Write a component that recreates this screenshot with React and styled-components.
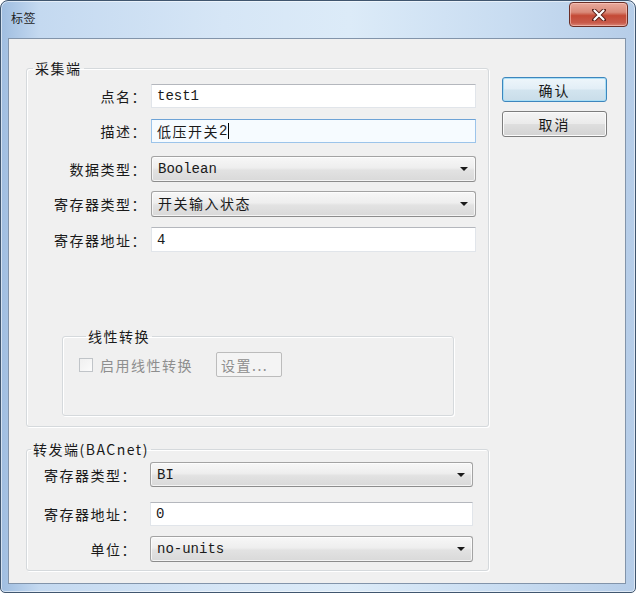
import React from 'react';
import styled, { createGlobalStyle } from 'styled-components';

const Global = createGlobalStyle`
  html, body { margin: 0; padding: 0; background: #ffffff; }
  body { font-family: "Noto Sans CJK SC", "Liberation Sans", sans-serif; }
  * { box-sizing: border-box; }
`;

const Window = styled.div`
  width: 636px;
  height: 593px;
  display: flex;
  flex-direction: column;
  border: 1px solid #40566f;
  border-radius: 8px 8px 5px 5px;
  background: linear-gradient(90deg, #9fbde0 0%, #c4d9f0 6%, #d6e6f6 35%, #dcebf8 55%, #c8dcf1 80%, #b6cde8 100%);
  padding: 0 9px 8px 7px;
  box-shadow: inset 0 0 0 1px rgba(255, 255, 255, 0.55);
`;

const TitleBar = styled.div`
  height: 37px;
  display: flex;
  justify-content: space-between;
  align-items: flex-start;
`;

const Title = styled.div`
  margin: 9px 0 0 3px;
  font-size: 12px;
  line-height: 16px;
  color: #1e1e1e;
  letter-spacing: 0.5px;
`;

const CloseButton = styled.div`
  width: 59px;
  height: 25px;
  margin: 1px -2px 0 0;
  border: 1px solid #6b2e26;
  border-radius: 4px;
  background: linear-gradient(#e9a99c 0%, #d98a79 40%, #c44a36 55%, #c85a4a 85%, #d98577 100%);
  box-shadow: inset 0 0 0 1px rgba(255, 210, 200, 0.55);
  display: flex;
  align-items: center;
  justify-content: center;
`;

const Client = styled.div`
  flex: 1;
  display: flex;
  align-items: flex-start;
  background: #f0f0f0;
  border: 1px solid #8294aa;
`;

const LeftColumn = styled.div`
  display: flex;
  flex-direction: column;
  gap: 13px;
  padding: 20px 0 0 17px;
`;

const RightColumn = styled.div`
  display: flex;
  flex-direction: column;
  gap: 9px;
  padding-top: 38px;
  margin-left: 13px;
`;

const Group = styled.fieldset`
  margin: ${p => p.$m || '0'};
  width: ${p => p.$w}px;
  padding: ${p => p.$pad};
  border: 1px solid #d5d9dc;
  border-radius: 3px;
  box-shadow: inset 1px 1px 0 #ffffff, 1px 1px 0 #ffffff;
  min-width: 0;
`;

const Legend = styled.legend`
  margin-left: ${p => p.$ml}px;
  padding: 0 2px;
  font-size: 14px;
  line-height: 18px;
  letter-spacing: 1.5px;
  color: #1a1a1a;
`;

const Row = styled.div`
  display: grid;
  grid-template-columns: ${p => p.$lw}px ${p => p.$fw}px;
  column-gap: ${p => p.$gap}px;
  align-items: center;
  margin-top: ${p => p.$mt || 0}px;
`;

const Label = styled.div`
  text-align: right;
  font-size: 14px;
  line-height: 18px;
  letter-spacing: 1.5px;
  color: #1a1a1a;
  white-space: nowrap;
`;

const Field = styled.div`
  height: ${p => p.$h}px;
  display: flex;
  align-items: center;
  padding: 0 6px 0 5px;
  font-family: "Liberation Mono", "Noto Sans CJK SC", monospace;
  font-size: 14px;
  line-height: 18px;
  color: #1a1a1a;
  white-space: nowrap;
`;

const TextBox = styled(Field)`
  background: ${p => (p.$focused ? '#f6fbff' : '#ffffff')};
  border: 1px solid ${p => (p.$focused ? '#9cc4ea' : '#e1e5ea')};
  border-top-color: ${p => (p.$focused ? '#6ea3d6' : '#b4b7bd')};
`;

const Combo = styled(Field)`
  justify-content: space-between;
  padding-left: 6px;
  border: 1px solid #a3a3a3;
  border-bottom-color: #8c8c8c;
  border-radius: 3px;
  background: linear-gradient(#f7f7f7 0%, #eeeeee 45%, #e2e2e2 55%, #d9d9d9 100%);
  box-shadow: inset 0 0 0 1px rgba(255, 255, 255, 0.7);
`;

const Cjk = styled.span`
  font-family: "Noto Sans CJK SC", sans-serif;
  letter-spacing: 1.5px;
`;

const Caret = styled.span`
  display: inline-block;
  width: 1px;
  height: 16px;
  background: #000;
  margin-left: 1px;
`;

const Arrow = styled.span`
  width: 0;
  height: 0;
  border-left: 4px solid transparent;
  border-right: 4px solid transparent;
  border-top: 4px solid #1a1a1a;
  margin-right: 1px;
`;

const CheckRow = styled.div`
  display: flex;
  align-items: center;
`;

const CheckBox = styled.span`
  width: 14px;
  height: 14px;
  border: 1px solid #c0c4c8;
  background: linear-gradient(135deg, #f0f0f0, #fbfbfb);
  margin-right: 7px;
`;

const DisabledText = styled.span`
  font-size: 14px;
  line-height: 18px;
  letter-spacing: 1.5px;
  color: #8e8e8e;
`;

const SmallButton = styled.div`
  width: 66px;
  height: 25px;
  margin-left: 23px;
  border: 1px solid #bcbcbc;
  border-radius: 2px;
  background: #f4f4f4;
  display: flex;
  align-items: center;
  padding-left: 4px;
  font-size: 14px;
  letter-spacing: 1.5px;
  color: #8e8e8e;
`;

const DialogButton = styled.div`
  width: 105px;
  height: ${p => p.$h || 25}px;
  display: flex;
  align-items: center;
  justify-content: center;
  border: 1px solid ${p => (p.$primary ? '#3d86bd' : '#7d7d7d')};
  border-radius: 3px;
  background: ${p =>
    p.$primary
      ? 'linear-gradient(#eef6fb 0%, #e2eef6 48%, #d2e4ef 52%, #c9dde9 100%)'
      : 'linear-gradient(#f4f4f4 0%, #ebebeb 48%, #dedede 52%, #d3d3d3 100%)'};
  box-shadow: inset 0 0 0 1px ${p => (p.$primary ? '#a9def5' : '#fbfbfb')};
  font-size: 14px;
  letter-spacing: 2px;
  color: #1a1a1a;
`;

const TextField = ({ h = 24, focused, children }) => (
  <TextBox $h={h} $focused={focused}>{children}</TextBox>
);

const ComboField = ({ h = 26, children }) => (
  <Combo $h={h}>
    <span>{children}</span>
    <Arrow />
  </Combo>
);

export default function App() {
  return (
    <>
      <Global />
      <Window>
        <TitleBar>
          <Title>标签</Title>
          <CloseButton>
            <svg width="14" height="12" viewBox="0 0 14 12">
              <path d="M2 1 L12 11 M12 1 L2 11" stroke="#5a1f18" strokeWidth="4" strokeLinecap="round" />
              <path d="M2.5 1.5 L11.5 10.5 M11.5 1.5 L2.5 10.5" stroke="#ffffff" strokeWidth="2.2" strokeLinecap="round" />
            </svg>
          </CloseButton>
        </TitleBar>
        <Client>
          <LeftColumn>
            <Group $w={463} $pad="7px 0 10px 0">
              <Legend $ml={6}>采集端</Legend>
              <Row $lw={120} $fw={325} $gap={4}>
                <Label>点名：</Label>
                <TextField>test1</TextField>
              </Row>
              <Row $lw={120} $fw={325} $gap={4} $mt={11}>
                <Label>描述：</Label>
                <TextField focused>
                  <Cjk>低压开关</Cjk>2<Caret />
                </TextField>
              </Row>
              <Row $lw={120} $fw={325} $gap={4} $mt={13}>
                <Label>数据类型：</Label>
                <ComboField>Boolean</ComboField>
              </Row>
              <Row $lw={120} $fw={325} $gap={4} $mt={9}>
                <Label>寄存器类型：</Label>
                <ComboField><Cjk>开关输入状态</Cjk></ComboField>
              </Row>
              <Row $lw={120} $fw={325} $gap={4} $mt={10}>
                <Label>寄存器地址：</Label>
                <TextField h={25}>4</TextField>
              </Row>
              <Group $w={392} $m="75px 0 0 35px" $pad="7px 0 38px 16px">
                <Legend $ml={7}>线性转换</Legend>
                <CheckRow>
                  <CheckBox />
                  <DisabledText>启用线性转换</DisabledText>
                  <SmallButton>设置...</SmallButton>
                </CheckRow>
              </Group>
            </Group>
            <Group $w={463} $pad="4px 0 8px 0">
              <Legend $ml={4}>转发端(BACnet)</Legend>
              <Row $lw={110} $fw={323} $gap={13}>
                <Label>寄存器类型：</Label>
                <ComboField h={25}>BI</ComboField>
              </Row>
              <Row $lw={110} $fw={323} $gap={13} $mt={15}>
                <Label>寄存器地址：</Label>
                <TextField>0</TextField>
              </Row>
              <Row $lw={110} $fw={323} $gap={13} $mt={10}>
                <Label>单位：</Label>
                <ComboField>no-units</ComboField>
              </Row>
            </Group>
          </LeftColumn>
          <RightColumn>
            <DialogButton $primary>确认</DialogButton>
            <DialogButton $h={26}>取消</DialogButton>
          </RightColumn>
        </Client>
      </Window>
    </>
  );
}
